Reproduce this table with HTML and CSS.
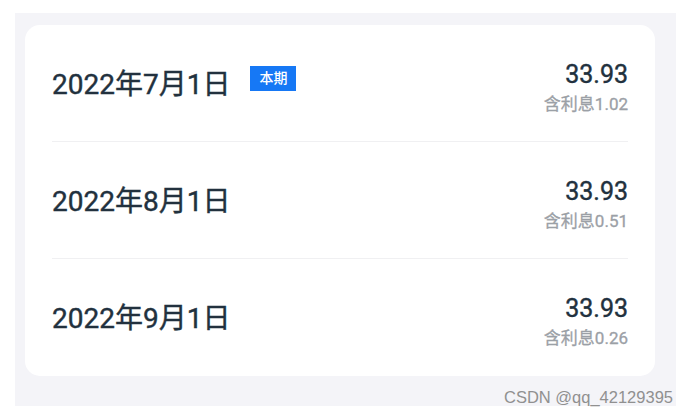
FILE: index.html
```html
<!DOCTYPE html>
<html lang="zh-CN">
<head>
<meta charset="utf-8">
<title>还款计划</title>
<link rel="stylesheet" href="styles.css">
</head>
<body>
<div class="page">
  <div class="panel">
    <div class="card">
      <div class="row">
        <div class="date-wrap">
          <span class="date">2022年7月1日</span>
          <span class="badge">本期</span>
        </div>
        <div class="amount">
          <div class="total">33.93</div>
          <div class="interest">含利息1.02</div>
        </div>
      </div>
      <div class="row">
        <div class="date-wrap">
          <span class="date">2022年8月1日</span>
        </div>
        <div class="amount">
          <div class="total">33.93</div>
          <div class="interest">含利息0.51</div>
        </div>
      </div>
      <div class="row">
        <div class="date-wrap">
          <span class="date">2022年9月1日</span>
        </div>
        <div class="amount">
          <div class="total">33.93</div>
          <div class="interest">含利息0.26</div>
        </div>
      </div>
    </div>
  </div>
  <div class="watermark">CSDN @qq_42129395</div>
</div>
</body>
</html>
```

FILE: styles.css
```css
html, body {
  margin: 0;
  padding: 0;
  background: #ffffff;
}

.page {
  position: relative;
  width: 690px;
  height: 416px;
  padding: 13px 0 0 15px;
  box-sizing: border-box;
  font-family: Roboto, "Noto Sans CJK SC", sans-serif;
}

.panel {
  width: 661px;
  height: 393px;
  background: #f4f4f8;
  padding: 12px 0 0 10px;
  box-sizing: border-box;
}

.card {
  width: 630px;
  background: #ffffff;
  border-radius: 15px;
  display: flex;
  flex-direction: column;
}

.row {
  height: 117px;
  margin: 0 27px;
  box-sizing: border-box;
  border-bottom: 1px solid #f0f0f2;
  display: flex;
  align-items: center;
  justify-content: space-between;
}

.row:last-child {
  border-bottom: none;
}

.date-wrap {
  display: flex;
  align-items: center;
  gap: 20px;
  margin-top: 3px;
}

.date {
  font-size: 28px;
  font-weight: 400;
  line-height: 34px;
  color: #22313e;
  -webkit-text-stroke: 0.4px #22313e;
}

.badge {
  background: #1678f5;
  color: #ffffff;
  font-size: 14px;
  line-height: 25px;
  height: 25px;
  padding: 0 9px;
  font-weight: 500;
  margin-top: -12px;
}

.amount {
  display: flex;
  flex-direction: column;
  align-items: flex-end;
  margin-top: 9px;
}

.total {
  font-size: 25px;
  font-weight: 400;
  line-height: 30px;
  color: #22313e;
  -webkit-text-stroke: 0.4px #22313e;
}

.interest {
  font-size: 17px;
  font-weight: 400;
  line-height: 24px;
  color: #9ba0a6;
  -webkit-text-stroke: 0.3px #9ba0a6;
  margin-top: 2px;
}

.watermark {
  position: absolute;
  right: 17px;
  bottom: 10px;
  font-family: "Liberation Sans", Arial, sans-serif;
  font-size: 16.5px;
  color: #909090;
  line-height: 18px;
}
```
